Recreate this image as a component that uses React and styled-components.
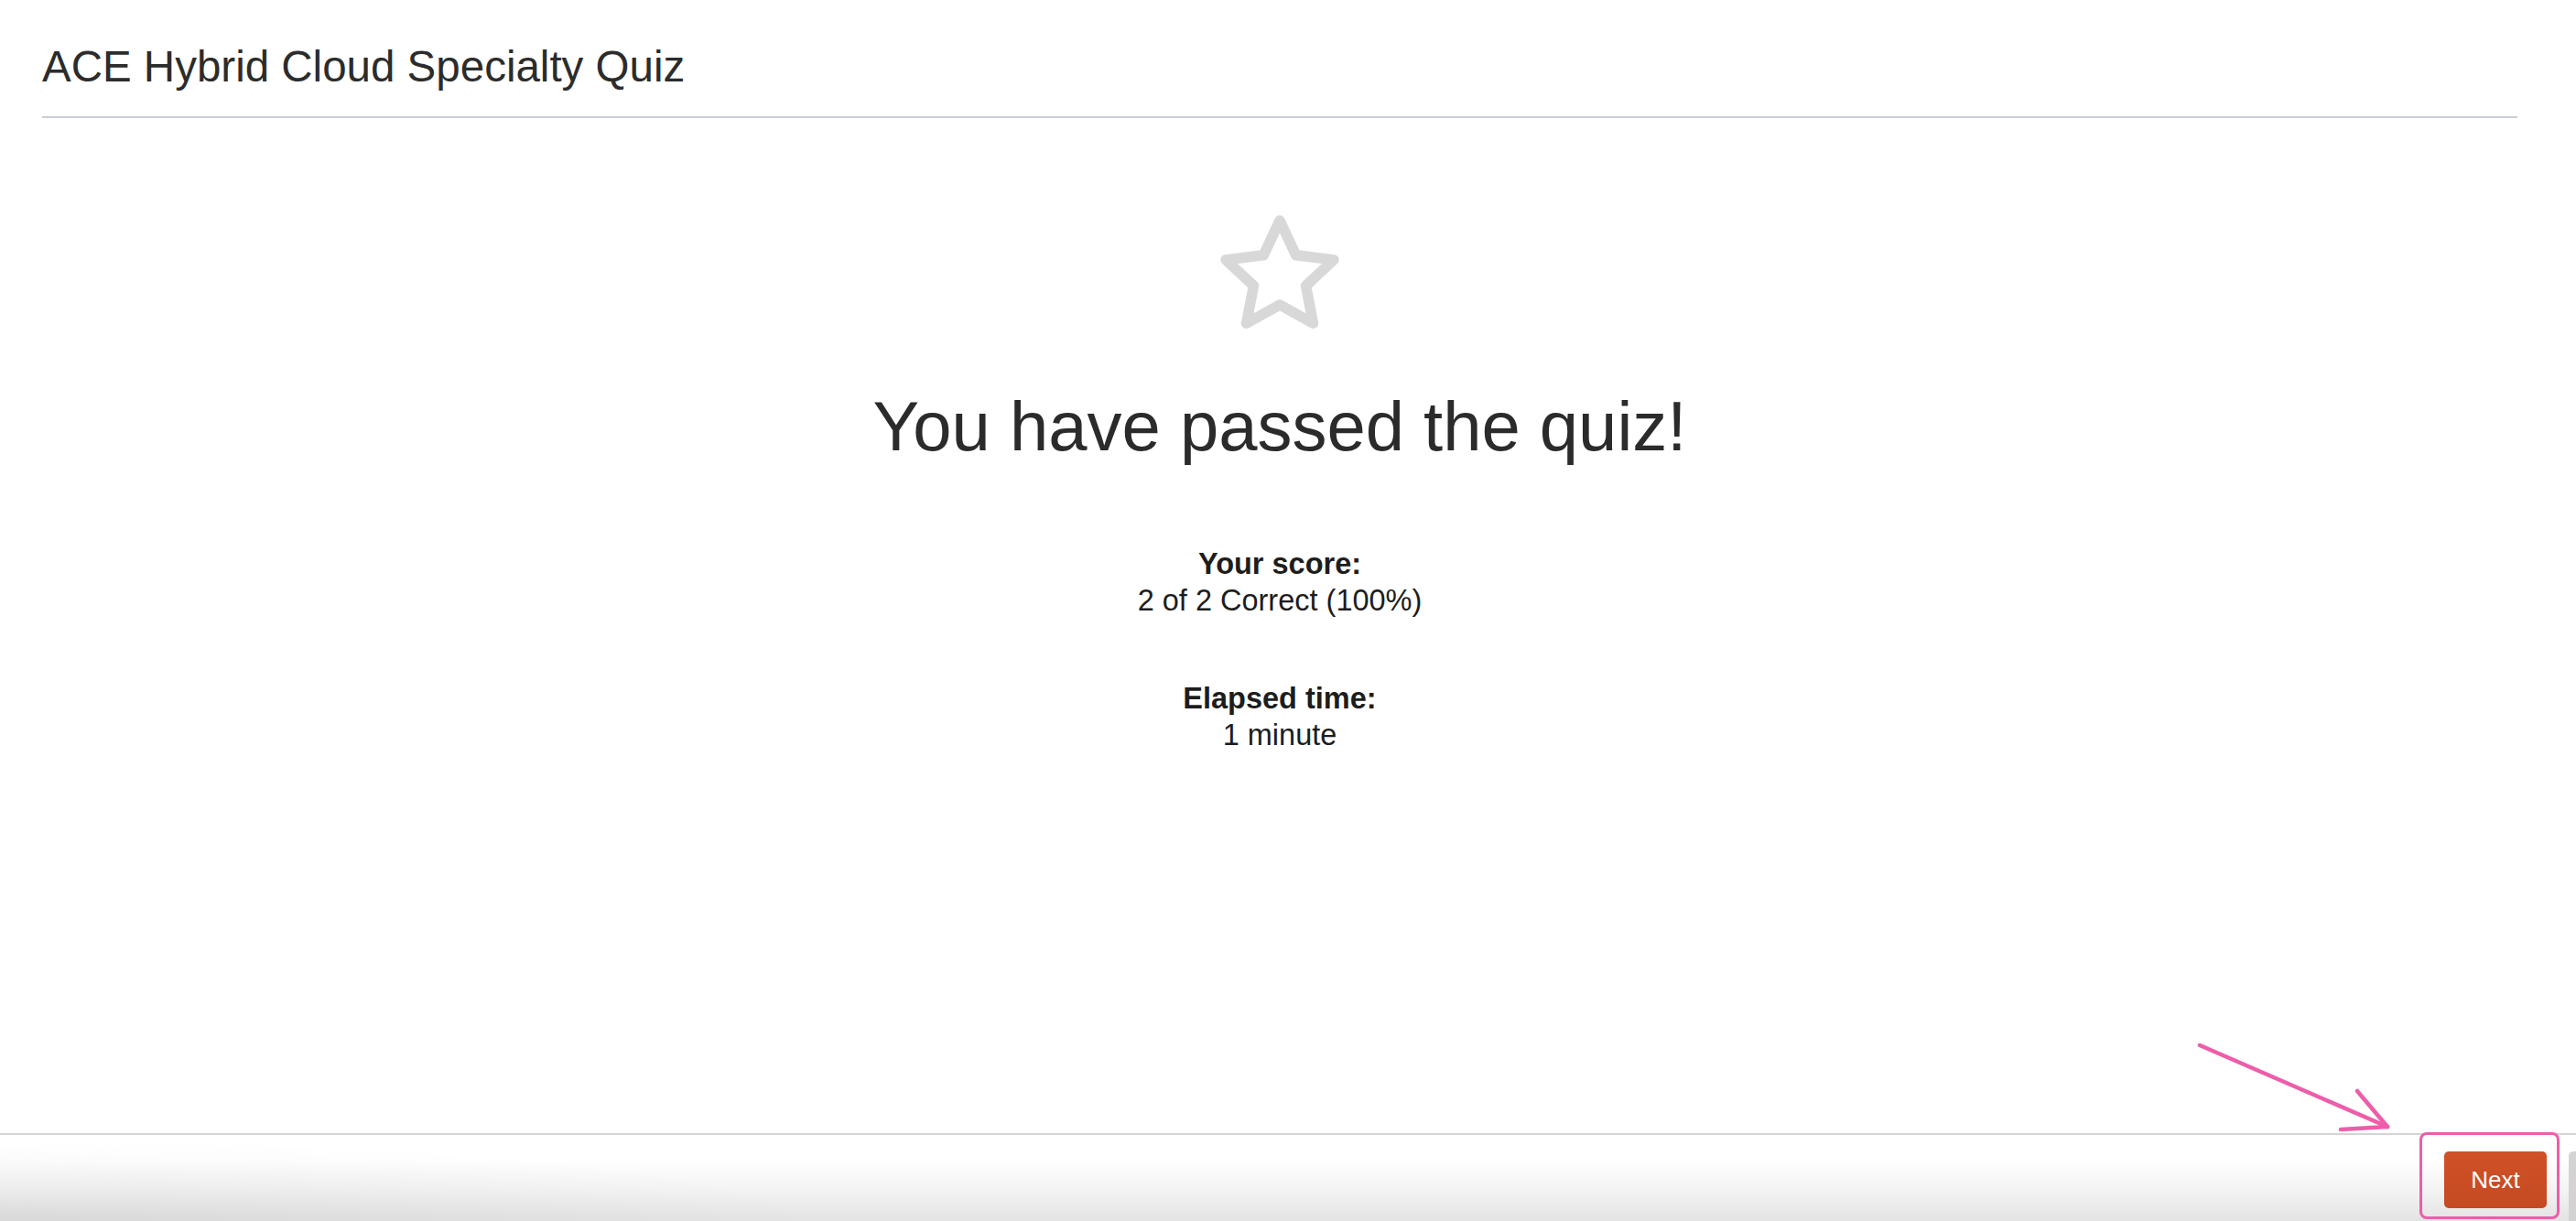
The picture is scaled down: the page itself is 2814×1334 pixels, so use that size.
import styled, { createGlobalStyle } from "styled-components";

const GlobalStyle = createGlobalStyle`
  html, body {
    margin: 0;
    padding: 0;
    background: #fff;
    overflow: hidden;
  }
  body {
    font-family: "Liberation Sans", Arial, Helvetica, sans-serif;
  }
`;

const Page = styled.div`
  position: relative;
  height: 100vh;
  display: flex;
  flex-direction: column;
  overflow: hidden;
`;

const Header = styled.header`
  margin: 0 64px 0 46px;
  padding-top: 49px;
  padding-bottom: 30px;
  border-bottom: 2px solid #c8cdd6;
`;

const Title = styled.h1`
  margin: 0;
  font-size: 47.5px;
  line-height: 48px;
  font-weight: 400;
  color: #2c2c2c;
  white-space: nowrap;
`;

const Main = styled.main`
  flex: 1;
  display: flex;
  flex-direction: column;
  align-items: center;
  padding: 102px 64px 0 46px;
`;

const StarIcon = styled.svg`
  display: block;
  width: 140px;
  height: 130px;
`;

const Heading = styled.h2`
  margin: 67px 0 0;
  font-size: 76px;
  line-height: 76px;
  font-weight: 400;
  color: #2b2b2b;
  white-space: nowrap;
`;

const Stat = styled.div`
  margin-top: ${(props) => props.$gap}px;
  text-align: center;
  font-size: 32.5px;
  line-height: 40px;
  color: #1d1d1d;
`;

const StatLabel = styled.div`
  font-weight: 700;
`;

const Footer = styled.footer`
  height: 96px;
  box-sizing: border-box;
  border-top: 2px solid #d4d4d4;
  padding-top: 18px;
  display: flex;
  justify-content: flex-end;
  align-items: flex-start;
  gap: 24px;
  background:
    radial-gradient(ellipse 900px 90px at 0% 100%, rgba(0, 0, 0, 0.05), transparent 100%),
    linear-gradient(to bottom, #ffffff 0%, #ffffff 28%, #f4f4f4 62%, #e3e3e3 100%);
`;

const ButtonSlot = styled.div`
  position: relative;
`;

const NextButton = styled.button`
  display: block;
  width: 112px;
  height: 62px;
  border: 0;
  border-radius: 5px;
  background: linear-gradient(to bottom, #d05127, #c54a22);
  color: #fff;
  font-family: "Liberation Sans", Arial, sans-serif;
  font-size: 26px;
  cursor: pointer;
`;

const SideButton = styled.div`
  flex-shrink: 0;
  width: 112px;
  height: 90px;
  margin-right: -104px;
  border-radius: 5px 0 0 0;
  background: #d3d3d3;
`;

const Highlight = styled.div`
  position: absolute;
  left: -27px;
  top: -21px;
  width: 153px;
  height: 95px;
  box-sizing: border-box;
  border: 3.5px solid #ee5da9;
  border-radius: 8px;
  pointer-events: none;
`;

const Arrow = styled.svg`
  position: absolute;
  left: 2390px;
  top: 1130px;
  width: 230px;
  height: 115px;
  pointer-events: none;
`;

export default function App() {
  return (
    <Page>
      <GlobalStyle />
      <Header>
        <Title>ACE Hybrid Cloud Specialty Quiz</Title>
      </Header>
      <Main>
        <StarIcon viewBox="0 0 140 130">
          <polygon
            points="70,10 87.63,47.73 128.97,52.84 98.53,81.27 106.44,122.16 70,102 33.56,122.16 41.47,81.27 11.03,52.84 52.37,47.73"
            fill="none"
            stroke="#d8d8d8"
            strokeWidth="11.5"
            strokeLinejoin="round"
          />
        </StarIcon>
        <Heading>You have passed the quiz!</Heading>
        <Stat $gap={92}>
          <StatLabel>Your score:</StatLabel>
          <div>2 of 2 Correct (100%)</div>
        </Stat>
        <Stat $gap={67}>
          <StatLabel>Elapsed time:</StatLabel>
          <div>1 minute</div>
        </Stat>
      </Main>
      <Footer>
        <ButtonSlot>
          <NextButton>Next</NextButton>
          <Highlight />
        </ButtonSlot>
        <SideButton />
      </Footer>
      <Arrow viewBox="0 0 230 115">
        <g stroke="#ee5da9" strokeWidth="4.5" strokeLinecap="round" fill="none">
          <line x1="13" y1="12" x2="218" y2="101" />
          <line x1="185" y1="62" x2="218" y2="101" />
          <line x1="167" y1="104" x2="218" y2="101" />
        </g>
      </Arrow>
    </Page>
  );
}
